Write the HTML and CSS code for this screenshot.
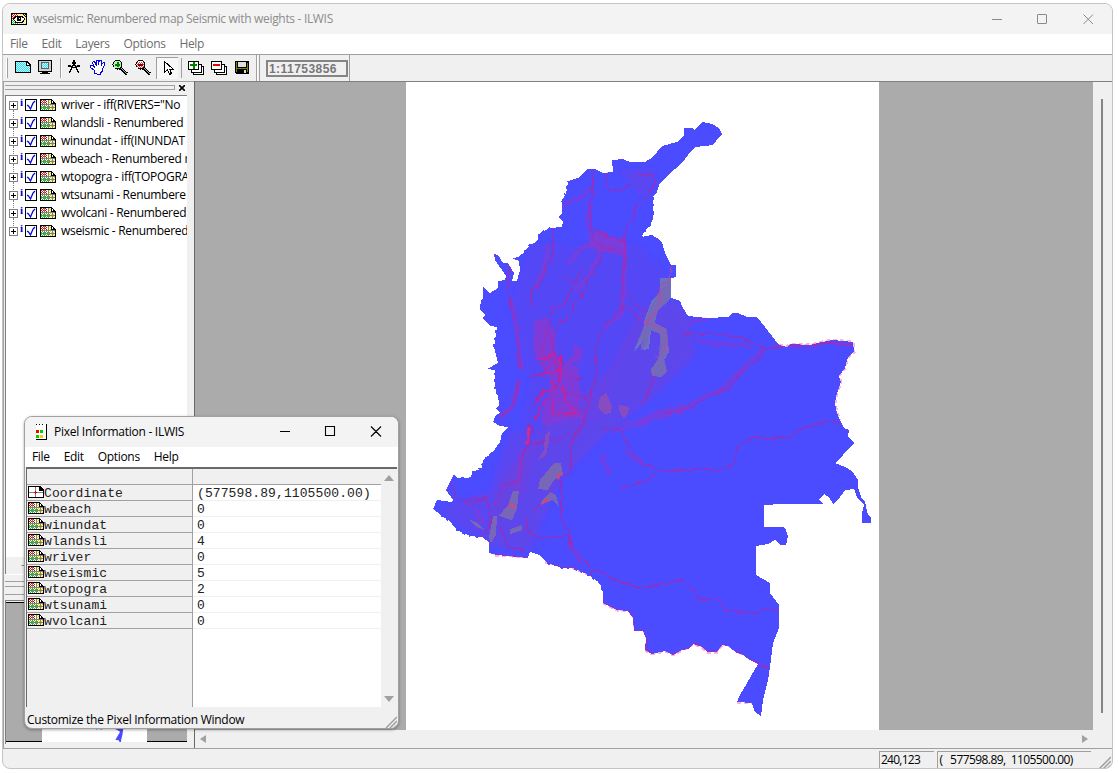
FILE: index.html
```html
<!DOCTYPE html>
<html lang="en">
<head>
<meta charset="utf-8">
<title>wseismic: Renumbered map Seismic with weights - ILWIS</title>
<link rel="stylesheet" href="styles.css">
</head>
<body>
<div class="window">
  <header class="titlebar">
    <svg class="appicon" width="16" height="14" shape-rendering="crispEdges"><path fill="#000" d="M0 1h12l4 4v8H0z"/><path fill="#fff" d="M1 2h6v10H1z"/><path data-dither="1 2 6 5" fill="#f00000"/><path data-dither="1 7 6 5" fill="#00d800"/><path fill="#fff" d="M7 2h4l4 4v6H7z"/><path data-dither="7 2 8 10" fill="#f4e840"/><path fill="#000" d="M12 1h4v4z"/><path fill="#fff" stroke="#000" d="M2.500 7L5 4.500h6L14 7l-3 3.500H5z"/><circle cx="8" cy="7" r="2.500" fill="#000"/><path fill="#fff" d="M8 6h1v1H8z"/></svg>
    <span class="title">wseismic: Renumbered map Seismic with weights - ILWIS</span>
    <svg class="controls" width="104" height="12"><path fill="none" stroke="#8a8a8a" d="M1 6.500h10M46.500 2q0-.5.500-.5h8q.5 0 .5.500v8q0 .5-.5.500h-8q-.5 0-.5-.5zM92.500 1.500l9.500 9.500M102 1.500L92.500 11"/></svg>
  </header>
  <nav class="menu main-menu"><span>File</span><span>Edit</span><span>Layers</span><span>Options</span><span>Help</span></nav>

  <div class="toolbar">
    <svg width="256" height="26" shape-rendering="crispEdges">
      <path fill="#a0a0a0" d="M4 3h1v20H4zM57 3h1v20h-1zM178 3h1v20h-1zM253 0h1v26h-1z"/><path fill="#fff" d="M3 3h1v20H3zM58 3h1v20h-1zM254 0h1v26h-1z"/>
      <path fill="#000" d="M12 6h12l4 4v8H12z"/><path fill="#c8fbff" d="M13 7h10v4h4v6H13z"/><path fill="#30e4f4" data-dither="13 7 10 10"/><path fill="#30e4f4" data-dither="23 11 4 6"/><path fill="#fff" d="M24 8l2 2h-2z"/>
      <path fill="#000" d="M35 5h14v12H35zM39 17h6v1h2v1H37v-1h2z"/><path fill="#d0d0d0" d="M36 6h12v10H36z"/><path fill="#c8fbff" stroke="#606060" d="M38.500 7.500h7v6h-7z"/><path fill="#30e4f4" data-dither="39 8 6 5"/>
      <g fill="none" stroke="#000" stroke-width="1.300"><path d="M71 5v5M71 9l-5 9M71 9l5 9M65 11h3l3 2 3-2h3M69 8h4"/></g>
      <path fill="#fff" stroke="#0000e0" d="M91.500 18.500v-3l-4-3v-2h2l2 2-2-5 1-1h1l2 4V5.500h2v4l1-4.500h2v5l2-3h1v3l-2 4v2l-2 2v2z"/>
      <path stroke="#000" stroke-width="3" d="M117 13l7 6"/><path stroke="#aaa" d="M118 13l6 6"/><circle cx="114.500" cy="9.500" r="4.500" fill="#baf0ba" stroke="#000"/><path stroke="#008000" stroke-width="2" d="M112 10h5M115 7v5"/>
      <path stroke="#000" stroke-width="3" d="M140 13l7 6"/><path stroke="#aaa" d="M141 13l6 6"/><circle cx="137.500" cy="9.500" r="4.500" fill="#fff" stroke="#000"/><path fill="#e04040" data-dither="134 7 7 6"/><path stroke="#900000" stroke-width="2" d="M135 10h5"/>
      <path fill="#f8f8f8" d="M153 2h22v22h-22z"/><path fill="#a0a0a0" d="M153 2h22v1h-21v21h-1z"/>
      <path fill="#fff" stroke="#000" d="M161.500 6.500v11l3-3 2 5 2-1-2-4.500h3.500z"/>
      <g fill="#fff" stroke="#000"><path d="M190.500 11.500h10v8h-10z"/><path d="M188.500 9.500h10v8h-10z"/><path d="M185.500 6.500h10v8h-10z"/><path d="M213.500 11.500h10v8h-10z"/><path d="M211.500 9.500h10v8h-10z"/><path d="M208.500 6.500h10v8h-10z"/></g>
      <path fill="#008000" d="M187 9h7v2h-7zM190 7h2v7h-2z"/><path fill="#f00000" d="M210 9h7v2h-7z"/>
      <path fill="#000" d="M232 6h14v13h-13l-1-1z"/><path fill="#808000" d="M233 7h1v10h-1zM244 8h1v9h-1zM234 13h10v1h-10z"/><path fill="#ddd" d="M235 7h8v5h-8zM241 15h2v3h-2z"/>
    </svg>
    <div class="scale-group"><span class="scale">1:11753856</span></div>
  </div>

  <main class="workspace">
    <aside class="sidebar">
      <div class="grip"><i></i><svg width="6" height="6"><path stroke="#000" stroke-width="1.600" d="M0 0l6 6M6 0L0 6"/></svg></div>
      <ul class="tree" id="tree"></ul>
      <div class="tree-scroll"><span>–</span></div>
      <div class="dock-edge"></div>
      <div class="grip second"><i></i></div>
      <div class="overview"><div class="overview-map"><svg width="105" height="141" viewBox="406 82 473 648" preserveAspectRatio="none"><use href="#outline"/></svg></div></div>
    </aside>
    <section class="mapview">
      <div class="map-row">
        <div class="canvas">
          <svg width="898" height="648" viewBox="195 82 898 648">
            <defs>
              <filter id="rough" x="-5%" y="-5%" width="110%" height="110%" color-interpolation-filters="sRGB"><feTurbulence type="fractalNoise" baseFrequency=".14" numOctaves="2" seed="4"/><feDisplacementMap in="SourceGraphic" scale="6" xChannelSelector="R" yChannelSelector="G"/></filter>
              <filter id="soft" x="-10%" y="-10%" width="120%" height="120%"><feGaussianBlur stdDeviation="2"/></filter>
              <path id="outline" fill="#4b4bff" d="M702 122L712 124 719 128 722 134 716 141 713 145 695 147 688 155 682 163 668 175 660 183 657 192 653 197 653 208 654 213 651 224 645 231 641 237 652 235 657 238 662 242 665 253 671 265 676 265 676 277 671 278 671 298 680 301 683 308 688 316 707 318 728 317 732 313 738 313 747 317 757 317 765 327 775 340 779 345 787 347 790 344 810 345 822 342 833 340 853 342 854 352 848 357 845 368 839 376 841 382 837 393 835 403 837 413 840 420 844 428 849 430 848 437 854 443 843 455 835 463 845 467 852 471 858 480 858 487 861 497 865 502 868 515 871 517 871 523 862 523 862 513 864 505 857 497 854 489 845 490 838 500 833 504 829 497 824 494 819 499 823 504 782 504 764 505 764 527 783 527 786 530 788 536 786 545 781 545 775 540 768 544 756 546 756 575 770 583 770 593 779 605 779 628 773 643 770 667 768 680 763 700 761 716 755 712 752 703 737 702 740 695 758 664 750 660 743 655 737 653 728 646 722 645 717 652 707 652 702 647 693 644 688 649 682 650 673 655 665 651 652 654 645 650 646 638 643 631 634 631 633 618 628 611 617 610 603 603 603 592 600 583 587 574 573 568 563 568 547 563 540 555 530 552 528 558 497 555 489 553 489 542 482 537 470 536 457 530 452 523 441 515 433 509 437 500 452 502 453 500 446 490 450 482 454 474 457 478 470 478 473 472 482 468 483 460 492 453 500 442 502 433 508 427 500 426 493 422 496 415 500 413 496 408 499 405 498 395 495 388 495 370 487 369 498 363 494 347 497 327 490 326 483 318 485 315 480 309 481 300 483 298 483 287 490 293 498 288 498 281 505 280 506 276 495 260 494 254 498 255 503 263 508 263 514 273 512 281 517 281 520 270 519 261 512 258 520 257 530 245 537 242 540 233 550 228 562 227 563 222 558 217 562 213 562 202 567 190 568 181 580 177 587 169 595 169 603 173 613 172 612 160 623 159 630 162 645 162 653 157 662 146 677 142 684 136 684 128 692 128 695 130z"/>
              <clipPath id="land"><use href="#outline"/></clipPath>
            </defs>
            <path fill="#fff" d="M406 82h473v648H406z"/>
            <path fill="none" stroke="#ffb3d8" stroke-width="3" stroke-dasharray="4 3" d="M779 345L787 347 790 344 810 345 822 342 833 340 853 342 854 352 848 357 845 368 839 376 841 382 837 393 835 403 837 413 840 420M545 562L573 568 587 574M603 603L617 610 628 611M645 650L652 654 665 651 673 655 682 650 693 644 702 647 707 652 717 652 722 645M737 702L752 703M495 555L528 557" shape-rendering="crispEdges"/>
            <use href="#outline" shape-rendering="crispEdges"/>
            <path fill="none" stroke="#4b4bff" stroke-width="2" stroke-dasharray="3 4 2 5" shape-rendering="crispEdges" d="M653 197L653 208 651 224 645 231 641 237M492 453L483 460 482 468 473 472 470 478 457 478M498 395L495 388 495 370M494 347L497 327M441 515L452 523 457 530 470 536 482 537M520 257L530 245 537 242 540 233 550 228M547 563L563 568 573 568 587 574 600 583 603 592M562 202L567 190 568 181"/>
            <g clip-path="url(#land)">
              <g filter="url(#soft)" fill="#7a3cd2">
                <path opacity=".4" d="M676 300L690 320 695 355 650 400 610 430 560 480 530 550 485 545 500 480 550 420 610 370 640 310z"/>
                <path opacity=".2" d="M530 245L640 245 670 280 640 330 615 370 600 420 520 440 530 380 510 310z"/>
                <path opacity=".32" d="M510 430L540 440 520 500 480 540 440 510 490 490zM620 170L655 170 650 190 640 197z"/>
              </g>
              <g filter="url(#rough)" fill="none">
                <path fill="#853bd5" opacity=".85" d="M534 321L546 318 556 335 556 358 562 365 578 365 580 410 586 417 560 421 548 426 542 423 543 405 548 400 550 378 540 365 533 350zM590 238L601 230 615 240 626 238 627 256 600 252 589 248zM564 361L574 355 573 345 583 350 580 361 566 366z"/>
                <g stroke="#853bd5" stroke-width="5" opacity=".55"><path d="M590 189L580 198 562 205M591 205L587 222 591 240 567 264M600 250L596 262 586 280 575 290M548 245L544 270 535 288M625 245L624 290 622 312 605 328M512 300L517 335 521 370M500 416L512 408 520 380M639 425L655 415 680 411 705 395 720 392 736 375 762 350M695 340L720 345 750 345M625 450L642 465M690 322L707 318M775 343L800 347 830 342 852 345M568 542L580 562M476 508L482 525M602 455L610 475M522 450L515 500"/></g>
                <path stroke="#853bd5" stroke-width="9" opacity=".4" d="M612 430L639 422 665 413 685 406"/>
                <g stroke="#c51c92" stroke-width="1" opacity=".85"><path d="M592 170L593 192 589 210 592 230 593 240 603 249 615 248M593 230L610 237 622 242 627 226 634 218 635 206 642 202 650 192 657 180 652 176 636 172M608 173L605 180 610 190 620 192 632 182M552 227L554 240 552 257 545 270 539 285 531 290 532 307M603 249L600 262 589 277 585 290 573 305 570 315 558 325 552 340 554 355M625 238L625 255 622 280 622 310 603 327 594 350 597 370 589 400 584 420 570 445 571 470 561 480 562 505M508 265L508 290 512 310 517 325 518 347 521 370M529 377L545 372 560 355 567 375 583 380M520 380L516 395 510 410 500 418M555 310L548 326 541 355 555 361 559 378 555 390M530 409L540 393 555 388 586 399M529 444L533 427 529 426 528 445 521 462 520 480 527 492M529 444L560 440 585 420M450 482L458 500 470 505 486 498 492 520 483 536M495 505L505 485 520 480M560 480L545 500 533 511M526 515L528 532 540 538 568 536 573 550 590 567 592 575M500 526L508 548 525 550M603 428L621 430 628 445 642 463 654 468 662 472 700 469 720 470 733 464 738 445 755 438 790 437 805 427 820 423 839 422M620 488L645 482 654 475M590 570L603 572 615 580 640 588 683 580 700 600 715 598 729 612 754 613 765 608 778 609M682 334L710 333 741 337 763 349 760 360 745 368 730 387 710 395 688 410 665 413M763 349L790 345 820 343 852 345M638 319L630 308 620 308M643 404L650 388 665 355M584 267L571 291 565 304 550 309M626 290L635 305 645 312M576 280L568 282 565 276M560 500L562 520 570 535 572 550M464 500L485 498"/></g>
                <g stroke="#db1b8a" stroke-width="1.300"><path d="M535 358L542 360 553 354 560 360 560 382M540 375L558 371 561 356M537 400L545 390 555 388 551 380M553 395L553 414 578 413M563 387L567 405 582 413M535 420L542 405 548 398"/></g>
                <path stroke="#d9298b" stroke-width="3" d="M529 427L527 444"/>
                <path stroke="#9b2bc5" stroke-width="1.500" d="M489 553L497 555 528 558M547 563L563 568 573 568 587 574M603 592L603 603 617 610 628 611 633 618 634 631 643 631 646 638 645 650 652 654 665 651 673 655 682 650 688 649 693 644 702 647 707 652 717 652 722 645 728 646 737 653 750 660 768 668"/>
              </g>
              <g shape-rendering="crispEdges" fill="#7867b6">
                <path fill="#6874c5" d="M660 278L671 278 671 297 664 305 657 311 655 323 666 329 669 352 664 360 667 372 661 377 653 376 651 370 658 359 662 348 660 334 651 330 649 349 643 350 644 338 638 348 634 351 643 330 645 318 652 300 660 293z"/>
                <path opacity=".8" d="M660 290L671 282 669 301 659 309 654 323 667 329 669 352 664 358 667 372 661 377 652 376 651 369 659 358 660 334 651 329 646 347 641 350 642 336 634 350 645 324 649 309z"/>
                <path d="M554 463L561 463 563 475 554 480 548 490 538 489 540 480zM542 500L550 492 556 495 559 507 552 500 541 505zM513 491L519 491 517 509 512 520 499 516 508 505zM493 516L497 516 496 535 491 543 489 537zM468 519L478 523 484 530 475 526zM510 529L522 525 522 530 510 534z"/>
                <path fill="#884bc0" d="M600 397L606 393 612 406 611 413 604 414 598 407zM619 405L629 407 628 413 624 419 619 410zM545 435L550 430 549 442 546 455 538 460 544 450z"/>
                <path fill="#c94982" d="M557 475L563 472 558 481zM507 507L512 503 516 508zM550 500L541 505 545 498z"/>
              </g>
              <path fill="none" stroke="#c5439b" filter="url(#rough)" d="M672 267L668 282 660 286 660 306 655 314 645 321 660 328 666 335 665 350 654 359"/>
            </g>
          </svg>
        </div>
        <div class="vscroll"><i></i></div>
      </div>
      <div class="hscroll"><svg width="898" height="14"><path fill="#a0a0a0" d="M5 7l6-4v8zM893 7l-6-4v8z"/></svg></div>
    </section>
  </main>
  <footer class="statusbar"><span class="pos">240,123</span><span class="xy">(&nbsp;&nbsp; 577598.89,&nbsp; 1105500.00)</span><svg width="13" height="13"><path stroke="#a0a0a0" stroke-width="1.500" d="M1 13L13 1M5 13l8-8M9 13l4-4"/></svg></footer>
</div>

<section class="dialog">
  <header class="dialog-title">
    <svg width="12" height="16" shape-rendering="crispEdges"><path fill="#fff" d="M1 0h10v15H1z"/><path fill="#000" d="M11 0h1v16h-1zM1 0h1v1H1zM4 0h1v1H4zM7 0h1v1H7zM1 15h11v1H1z"/><path fill="#f00" d="M1 6h3v3H1z"/><path fill="#00d000" d="M5 6h3v3H5zM1 11h3v3H1z"/><path fill="#f0d000" d="M5 11h3v3H5z"/></svg>
    <span>Pixel Information - ILWIS</span>
    <svg class="controls" width="103" height="12"><path fill="none" stroke="#000" stroke-width="1.100" d="M1 5.500h10M46.500.5h9v9h-9zM92 .5l10 10M102 .5l-10 10"/></svg>
  </header>
  <nav class="menu dialog-menu"><span>File</span><span>Edit</span><span>Options</span><span>Help</span></nav>
  <div class="table-wrap">
    <div class="grid" id="grid"><div class="cell head"></div><div class="cell val head"></div></div>
    <div class="dscroll"><svg width="10" height="6"><path fill="#a0a0a0" d="M5 0l5 6H0z"/></svg><svg width="10" height="6"><path fill="#a0a0a0" d="M5 6l5-6H0z"/></svg></div>
  </div>
  <footer class="dialog-status"><span>Customize the Pixel Information Window</span><svg width="12" height="12"><path stroke="#a0a0a0" stroke-width="1.500" d="M1 12L12 1M5 12l7-7M9 12l3-3"/></svg></footer>
</section>
<script src="app.js"></script>
</body>
</html>
```
FILE: styles.css
```css
* { box-sizing: border-box; }
body { margin: 0; width: 1118px; height: 773px; overflow: hidden; background: #fff; font: 12px/16px "Open Sans", "Noto Sans", sans-serif; letter-spacing: -.32px; color: #000; position: relative; padding: 3px 5px 4px 2px; }
svg { display: block; flex: none; }
.window { height: 766px; border: 1px solid #c4c4c4; border-radius: 8px; background: #f0f0f0; overflow: hidden; display: flex; flex-direction: column; }
.titlebar { height: 30px; flex: none; background: #f3f3f3; display: flex; align-items: center; padding: 0 17px 0 8px; color: #8c8c8c; }
.title { margin-left: 6px; }
.controls { margin-left: auto; }
.menu { display: flex; background: #fff; }
.main-menu { height: 20px; flex: none; padding: 2px 7px; gap: 13.8px; color: #6d6d6d; }
.toolbar { height: 27px; flex: none; border-top: 1px solid #a0a0a0; display: flex; }
.scale-group { width: 91px; border-right: 1px solid #a0a0a0; padding: 5px 2px 0 6px; border-left: 1px solid #a0a0a0; }
.scale { display: block; width: 82px; height: 17px; border: 2px solid #858585; font: bold 12px/14px "Liberation Sans", sans-serif; color: #777; padding-left: 1px; letter-spacing: .45px; }
.workspace { height: 667px; flex: none; display: flex; }
.sidebar { width: 191px; padding: 1px 7px 0 1px; border-top: 1px solid #a0a0a0; border-left: 1px solid #a0a0a0; display: flex; flex-direction: column; }
.grip { height: 12px; flex: none; display: flex; justify-content: space-between; padding: 2px 2px 0 0; }
.grip i { width: 170px; height: 5px; border: solid #a0a0a0; border-width: 1px 1px 1px 0; }
.tree { height: 462px; flex: none; margin: 0; padding: 0 0 0 3px; list-style: none; background: #fff; border: 1px solid #808080; border-right: 0; border-bottom: 0; overflow: hidden; }
.tree li { height: 18px; display: flex; align-items: center; white-space: nowrap; position: relative; }
.tree li::before { content: ""; position: absolute; left: 4px; top: 14px; height: 8px; border-left: 1px dotted #808080; }
.tree li:last-child::before { display: none; }
.tree b { flex: none; font: bold 11px/13px "Liberation Serif", serif; color: #00c; width: 7px; padding-left: 2px; height: 18px; }
.tree span { flex: none; margin-left: 5px; letter-spacing: -.3px; }
.tree .check { margin-right: 3px; }
.tree-scroll { height: 17px; padding-left: 15px; color: #888; line-height: 15px; border-left: 1px solid #808080; }
.dock-edge { height: 12px; border-top: 1px solid #fff; background: linear-gradient(#f0f0f0 6px, #a0a0a0 6px, #a0a0a0 7px, #f0f0f0 7px); }
.grip.second { height: 14px; padding-top: 0; }
.grip.second i { width: 180px; height: 9px; }
.overview { height: 144px; background: #ababab; border: 1px solid #808080; border-bottom: 0; border-right: 0; box-shadow: inset 0 1px #f0f0f0, inset 0 2px #000, inset 0 -2px #f0f0f0, inset 0 -3px #000; display: flex; padding-left: 36px; }
.overview-map { width: 105px; height: 139px; margin-top: 2px; background: #fff; overflow: hidden; }
.overview-map svg { margin: 2px 0 0; }
.mapview { flex: 1; border-left: 1px solid #696969; display: flex; flex-direction: column; }
.map-row { display: flex; height: 649px; border-top: 1px solid #808080; }
.canvas { width: 898px; height: 648px; overflow: hidden; background: #ababab; }
.vscroll { flex: 1; padding: 17px 0 0 8px; }
.vscroll i { display: block; width: 2px; height: 614px; background: #858585; }
.hscroll { height: 17px; padding-top: 2px; }
.statusbar { flex: 1; border-top: 1px solid #a0a0a0; display: flex; padding: 2px 1px 0 876px; letter-spacing: -.75px; }
.pos, .xy { height: 18px; border: solid #a0a0a0; border-width: 1px 0 0 1px; padding-left: 1px; line-height: 16px; white-space: nowrap; }
.pos { width: 56px; margin-right: 3px; }
.xy { width: 155px; letter-spacing: -.57px; }
.statusbar svg { margin: 5px 0 0 7px; }
.dialog { position: absolute; left: 24px; top: 416px; width: 375px; height: 313px; border: 1px solid #a0a0a0; border-radius: 8px; background: #f0f0f0; overflow: hidden; box-shadow: 0 1px 3px #0005; display: flex; flex-direction: column; }
.dialog-title { height: 30px; flex: none; display: flex; align-items: center; padding: 0 16px 0 10px; background: #f3f3f3; }
.dialog-title span { margin-left: 7px; letter-spacing: -.26px; }
.dialog-menu { height: 20px; padding: 2px 7px; gap: 14px; }
.table-wrap { height: 240px; margin: 0 1px 0 1px; border: solid #696969; border-width: 2px 0 0 1px; display: flex; }
.grid { width: 354px; height: 238px; display: grid; grid-template-columns: 166px 188px; grid-template-rows: 16px; grid-auto-rows: 16px; background: linear-gradient(90deg, #f0f0f0 165px, #a0a0a0 165px, #a0a0a0 166px, #fff 166px); font: 13px/17px "Liberation Mono", monospace; letter-spacing: .1px; color: #222; overflow: hidden; }
.cell { border-bottom: 1px solid #a0a0a0; display: flex; padding-left: 1px; }
.cell.val { border-color: #f0f0f0; padding-left: 4px; }
.cell.head { border-color: #a0a0a0; }
.head.val { background: #f0f0f0; }
.dscroll { flex: 1; display: flex; flex-direction: column; justify-content: space-between; align-items: center; padding: 6px 0 5px; }
.dialog-status { flex: 1; display: flex; justify-content: space-between; align-items: center; padding: 5px 1px 0 2px; letter-spacing: -.27px; }
.dialog-status svg { align-self: flex-end; }
```
FILE: app.js
```js
// Checkerboard of single pixels, as used by the 16-colour icons.
const dither = (x0, y0, w, h) => {
  let d = '';
  for (let y = y0; y < y0 + h; y++) for (let x = x0; x < x0 + w; x++) if ((x + y) % 2) d += `M${x} ${y}h1v1h-1z`;
  return d;
};
document.querySelectorAll('[data-dither]').forEach(p => p.setAttribute('d', dither(...p.dataset.dither.split(' ').map(Number))));

const svg = (w, h, body, cls = '') => `<svg class="${cls}" width="${w}" height="${h}" shape-rendering="crispEdges">${body}</svg>`;
const mapIcon = svg(16, 14, `<path fill="#000" d="M0 1h12v1h1v1h1v1h1v1h1v8H0z"/><path fill="#fff" d="M1 2h10v4h4v6H1z"/>
  <path fill="#f00000" d="${dither(1, 2, 6, 5)}"/><path fill="#00d800" d="${dither(1, 7, 9, 5)}"/><path fill="#f0e000" d="${dither(8, 2, 3, 5)}${dither(10, 6, 5, 6)}"/>
  <path fill="#808080" d="M4 2h1v10H4zM8 2h1v10H8zM12 6h1v6h-1zM1 6h14v1H1zM1 9h14v1H1z"/><path fill="#fff" d="M12 3h1v2h-1z"/>`);
const plus = svg(9, 9, '<path fill="#808080" d="M0 0h9v9H0z"/><path fill="#fff" d="M1 1h7v7H1z"/><path fill="#000" d="M2 4h5v1H2zM4 2h1v5H4z"/>');
const check = svg(12, 12, '<path fill="#000" d="M0 0h12v12H0z"/><path fill="#fff" d="M1 1h10v10H1z"/><path shape-rendering="auto" fill="none" stroke="#0000e0" stroke-width="1.300" d="M2 6l1.500 1L5.500 10 8 4l2-2"/>', 'check');
const coord = svg(16, 14, '<path fill="#000" d="M0 1h12l4 4v8H0z"/><path fill="#fff" d="M1 2h10v4h4v6H1z"/><path fill="#808080" d="M7 2h1v10H7zM1 7h14v1H1z"/><path fill="#e00000" d="M6 7h3v1H6zM7 6h1v3H7z"/>');

const layers = ['wriver - iff(RIVERS="No', 'wlandsli - Renumbered', 'winundat - iff(INUNDAT', 'wbeach - Renumbered r', 'wtopogra - iff(TOPOGRA', 'wtsunami - Renumbere', 'wvolcani - Renumbered', 'wseismic - Renumbered'];
document.getElementById('tree').innerHTML = layers.map(t => `<li>${plus}<b>i</b>${check}${mapIcon}<span>${t}</span></li>`).join('');

const rows = [['Coordinate', '(577598.89,1105500.00)'], ['wbeach', 0], ['winundat', 0], ['wlandsli', 4], ['wriver', 0], ['wseismic', 5], ['wtopogra', 2], ['wtsunami', 0], ['wvolcani', 0]];
document.getElementById('grid').insertAdjacentHTML('beforeend', rows.map(([n, v], i) =>
  `<div class="cell">${i ? mapIcon : coord}<span>${n}</span></div><div class="cell val">${v}</div>`).join(''));
```
